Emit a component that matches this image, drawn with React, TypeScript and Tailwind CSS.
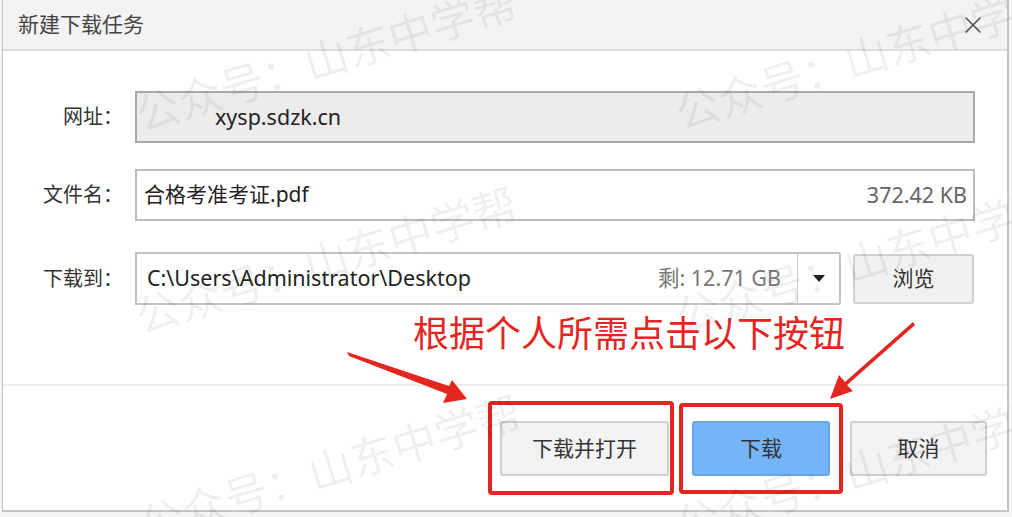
import { X } from 'lucide-react'

const font = { fontFamily: '"Noto Sans", "Noto Sans CJK SC", sans-serif' }

const marks = [
  { left: 128, top: 36 },
  { left: 668, top: 34 },
  { left: 128, top: 238 },
  { left: 668, top: 238 },
  { left: 132, top: 446 },
  { left: 668, top: 446 },
]

function Watermarks() {
  return (
    <div className="pointer-events-none absolute inset-0 overflow-hidden">
      {marks.map((m, i) => (
        <div
          key={i}
          className="absolute whitespace-nowrap text-[44px] leading-none text-[rgba(0,0,0,0.07)] -rotate-[17deg]"
          style={{ left: m.left, top: m.top }}
        >
          公众号：山东中学帮
        </div>
      ))}
    </div>
  )
}

function Arrows() {
  return (
    <svg className="pointer-events-none absolute inset-0" width="1012" height="517" viewBox="0 0 1012 517">
      {/* left arrow */}
      <polygon points="347,352 349,356 447,394 443,403 467,399 452,380 449,386" fill="#e3261f" />
      {/* right arrow */}
      <polygon points="915,325 913,322 845,382 839,375 830,399 853,391 847,385" fill="#e3261f" />
    </svg>
  )
}

export default function App() {
  return (
    <div className="relative h-[517px] w-[1012px] overflow-hidden bg-[#f4f4f4]" style={font}>
      <div className="ml-[2px] flex h-[512px] w-[1007px] flex-col border-r-2 border-b-2 border-l border-[#c4c4c4] bg-white">
        {/* title bar */}
        <div className="flex h-[51px] shrink-0 items-center justify-between border-b-2 border-[#dedede] bg-[#f3f3f3] pl-[15px] pr-[20px]">
          <span className="text-[21px] text-[#444]">新建下载任务</span>
          <X size={28} strokeWidth={1.4} className="text-[#555]" />
        </div>

        {/* form */}
        <div className="flex flex-col pt-[40px] text-[21.5px] text-[#222]">
          <div className="flex h-[52px] items-center">
            <span className="w-[120px] shrink-0 text-right text-[20px] text-[#333]">网址：</span>
            <div className="ml-[12px] flex h-[52px] w-[840px] items-center border-2 border-[#a9a9a9] bg-[#ececec] pl-[78px]">
              xysp.sdzk.cn
            </div>
          </div>

          <div className="mt-[26px] flex h-[52px] items-center">
            <span className="w-[120px] shrink-0 text-right text-[20px] text-[#333]">文件名：</span>
            <div className="ml-[12px] flex h-[52px] w-[840px] items-center justify-between border-2 border-[#bdbdbd] bg-white pl-[7px] pr-[6px]">
              <span className="text-[21px]">合格考准考证.pdf</span>
              <span className="text-[#666]">372.42 KB</span>
            </div>
          </div>

          <div className="mt-[31px] flex h-[53px] items-center">
            <span className="w-[120px] shrink-0 text-right text-[20px] text-[#333]">下载到：</span>
            <div className="ml-[12px] flex h-[53px] w-[706px] items-center rounded-r-[3px] border-2 border-[#c4c4c4] bg-white">
              <span className="flex-1 pl-[10px]">C:\Users\Administrator\Desktop</span>
              <span className="pr-[16px] text-[#777]">剩: 12.71 GB</span>
              <div className="flex h-full w-[42px] items-center justify-center border-l border-[#cfcfcf]">
                <div className="h-0 w-0 border-x-[6px] border-t-[7px] border-x-transparent border-t-[#222]" />
              </div>
            </div>
            <button className="ml-[12px] flex h-[50px] w-[121px] items-center justify-center rounded-[3px] border-2 border-[#d0d0d0] bg-[#f1f1f1] text-[21px] text-[#333]">
              浏览
            </button>
          </div>

          <div className="mt-[9px] h-[40px] pl-[410px] text-[36px] leading-[40px] text-[#e3261f]">
            根据个人所需点击以下按钮
          </div>
        </div>

        <div className="mt-[30px] border-t-2 border-[#ececec]" />

        {/* buttons */}
        <div className="flex items-start pt-[35px] text-[21px] text-[#333]">
          <button className="ml-[497px] flex h-[55px] w-[169px] items-center justify-center rounded-[3px] border-2 border-[#cfcfcf] bg-[#f3f3f3]">
            下载并打开
          </button>
          <button className="ml-[23px] flex h-[55px] w-[138px] items-center justify-center rounded-[3px] border-2 border-[#69a6ee] bg-[#76b4fa]">
            下载
          </button>
          <button className="ml-[20px] flex h-[55px] w-[137px] items-center justify-center rounded-[3px] border-2 border-[#cfcfcf] bg-[#f3f3f3]">
            取消
          </button>
        </div>
      </div>

      {/* annotation boxes */}
      <div className="pointer-events-none absolute left-[488px] top-[401px] h-[94px] w-[186px] rounded-[4px] border-[4px] border-[#e3261f]" />
      <div className="pointer-events-none absolute left-[679px] top-[403px] h-[91px] w-[164px] rounded-[4px] border-[4px] border-[#e3261f]" />
      <Arrows />
      <Watermarks />
    </div>
  )
}
